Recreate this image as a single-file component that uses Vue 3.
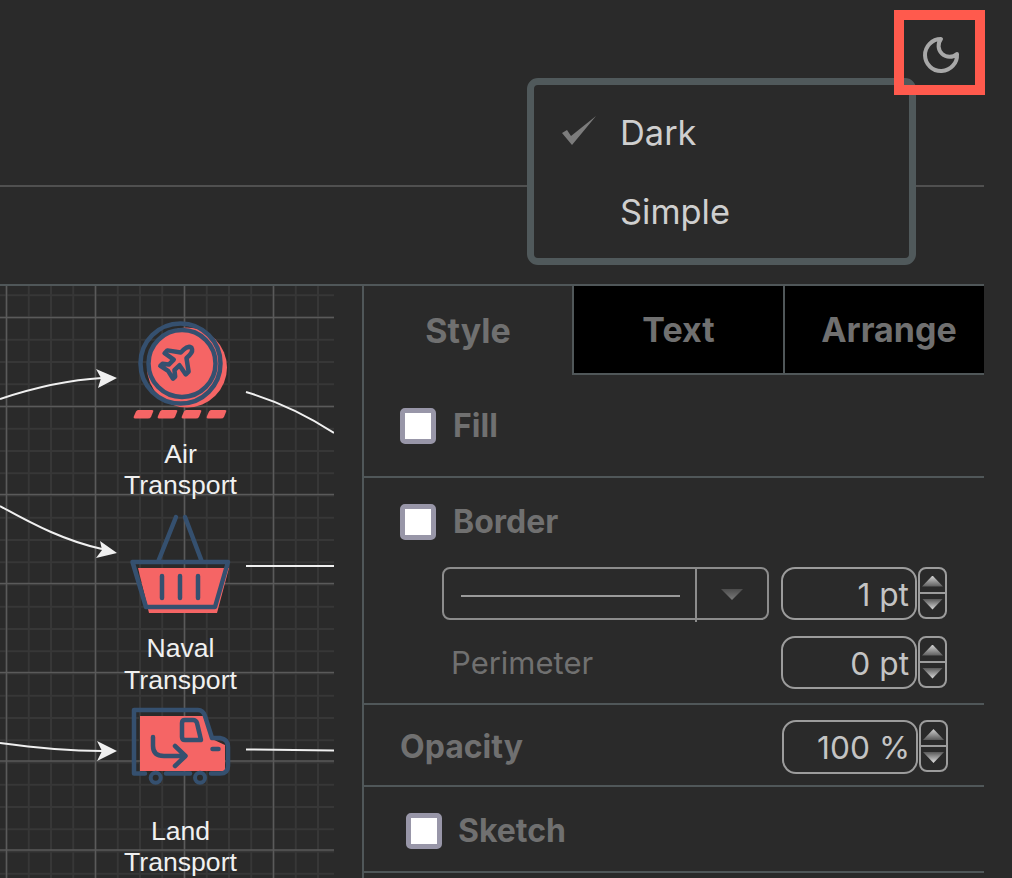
<template>
  <div class="page">
    <div class="frame">
      <div class="menubar"></div>
      <div class="toolbar"></div>
      <div class="main">
        <!-- diagram canvas -->
        <svg class="canvas" width="334" height="592" viewBox="0 286 334 592">
          <line v-for="x in minorX" :key="'mx' + x" :x1="x" :x2="x" y1="286" y2="878" class="minor" />
          <line v-for="y in minorY" :key="'my' + y" :y1="y" :y2="y" x1="0" x2="334" class="minor" />
          <line v-for="x in majorX" :key="'x' + x" :x1="x" :x2="x" y1="286" y2="878" class="major" />
          <line v-for="y in majorY" :key="'y' + y" :y1="y" :y2="y" x1="0" x2="334" class="major" />

          <!-- connectors -->
          <path class="edge" d="M0 399C36 387 66 380 102 378" />
          <path class="edge" d="M0 506C36 526 66 541 102 549" />
          <path class="edge" d="M0 743C36 748 66 751 102 751" />
          <path class="edge" d="M246 392C280 402 308 416 334 433" />
          <path class="edge" d="M246 566H334" />
          <path class="edge" d="M246 749.5L334 750.5" />
          <polygon class="head" points="96,369 117,378 98,388 101,378" />
          <polygon class="head" points="100,541 117,553 96,558 102,550" />
          <polygon class="head" points="97,741 117,751 97,761 102,751" />

          <!-- air transport -->
          <circle class="red" cx="187" cy="367.5" r="40" />
          <circle class="navy" cx="180.5" cy="363.5" r="40" />
          <circle class="navy" cx="182" cy="363.5" r="33.5" />
          <path
            class="navy plane"
            transform="translate(178 361) rotate(45)"
            d="M0 -19Q4 -18 4 -12V-8L15 0V4L4 2V9L9 13V16L0 14L-9 16V13L-4 9V2L-15 4V0L-4 -8V-12Q-4 -18 0 -19Z"
          />
          <path
            v-for="x in dashes"
            :key="x"
            class="red"
            :d="`M${x + 4} 410H${x + 18}Q${x + 20} 410 ${x + 19} 412L${x + 17} 417Q${x + 16} 418.5 ${x + 14} 418.5H${x + 1}Q${x - 1} 418.5 ${x} 416L${x + 2} 411.5Q${x + 3} 410 ${x + 4} 410Z`"
          />

          <!-- naval transport -->
          <polygon class="red" points="138,568 229,568 217,613 149,613" />
          <path class="navy" d="M132.5 562H228L215 607H146ZM158 562L176 517M185 517L202 562" />
          <path class="navy bars" d="M162 576V598M180 576V598M198 576V598" />

          <!-- land transport -->
          <polygon class="red" points="140,716 203,716 212,739 225,745 225,771 140,771" />
          <path class="navy" d="M145 773.5H134V710H198Q203 710 205 716L212 738H220Q228 739 228 747V766Q228 773.5 220 773.5H211" />
          <path class="navy" d="M166 773.5H190" />
          <circle class="wheel" cx="155.7" cy="777.7" r="5" />
          <circle class="wheel" cx="200" cy="777.7" r="5" />
          <path class="navy" d="M185 720H193Q196 720 197 723L201 740H185Q182 740 182 737V723Q182 720 185 720Z" />
          <path class="navy" d="M212.5 749H218.5" />
          <path class="navy" d="M153 737V746Q153 756 164 756H185M175 746L185.5 756L175 766" />

          <text v-for="t in labels" :key="t.text + t.y" class="label" x="180.5" :y="t.y">{{ t.text }}</text>
        </svg>

        <!-- format panel -->
        <div class="panel">
          <div class="tabs">
            <div class="tab active">Style</div>
            <div class="tab text-tab">Text</div>
            <div class="tab arrange-tab">Arrange</div>
          </div>

          <div class="section fill-section">
            <span class="check"></span>
            <span class="strong">Fill</span>
          </div>

          <div class="section border-section">
            <div class="check-row">
              <span class="check"></span>
              <span class="strong">Border</span>
            </div>
            <div class="row line-row">
              <div class="select">
                <span class="select-line"></span>
                <span class="select-btn"><i class="select-arrow"></i></span>
              </div>
              <div class="spin">
                <div class="input">1 pt</div>
                <div class="stepper"><i class="up"></i><i class="down"></i></div>
              </div>
            </div>
            <div class="row perimeter-row">
              <span class="plain">Perimeter</span>
              <div class="spin">
                <div class="input">0 pt</div>
                <div class="stepper"><i class="up"></i><i class="down"></i></div>
              </div>
            </div>
          </div>

          <div class="section opacity-section">
            <span class="strong">Opacity</span>
            <div class="spin">
              <div class="input">100 %</div>
              <div class="stepper"><i class="up"></i><i class="down"></i></div>
            </div>
          </div>

          <div class="section sketch-section">
            <span class="check"></span>
            <span class="strong">Sketch</span>
          </div>
        </div>
      </div>
    </div>

    <!-- theme menu -->
    <div class="menu">
      <div class="menu-item">
        <svg class="tick" width="36" height="32" viewBox="0 0 36 32">
          <polygon points="1,18 6,15 10,21 35,1 11,30" />
        </svg>
        Dark
      </div>
      <div class="menu-item">Simple</div>
    </div>

    <!-- highlighted theme button -->
    <div class="highlight">
      <svg width="40" height="40" viewBox="920 35 40 40">
        <path class="moon" d="M941 39A16 16 0 1 0 957 54A11 11 0 0 1 941 39Z" />
      </svg>
    </div>
  </div>
</template>

<script setup>
const step = 22.25

// minor grid lines every 22.25px, major every fourth one
const majorX = [6.5, 95.5, 184.5, 273.5]
const majorY = [317.5, 406.5, 494.5, 583.5, 672.5, 761, 850]
const minorX = []
const minorY = []
for (let i = 0; i < 16; i++) minorX.push(6.5 + i * step)
for (let i = -1; i < 27; i++) minorY.push(317.5 + i * step)

const dashes = [134, 158, 182, 207]

const labels = [
  { text: 'Air', y: 463 },
  { text: 'Transport', y: 494 },
  { text: 'Naval', y: 657 },
  { text: 'Transport', y: 689 },
  { text: 'Land', y: 840 },
  { text: 'Transport', y: 871 }
]
</script>

<style>
html,
body {
  background: #2a2a2a;
}
</style>

<style scoped>
.page {
  position: relative;
  width: 1012px;
  height: 878px;
  overflow: hidden;
  background: #2a2a2a;
  font-family: Inter, "Liberation Sans", sans-serif;
}

.frame {
  width: 984px;
}

.menubar {
  height: 187px;
  box-sizing: border-box;
  border-bottom: 2px solid #505050;
}

.toolbar {
  height: 99px;
  box-sizing: border-box;
  border-bottom: 2px solid #505759;
}

.main {
  display: flex;
  height: 592px;
}

.canvas {
  display: block;
  flex: none;
}

.minor {
  stroke: #373737;
  stroke-width: 2;
}

.major {
  stroke: #5a5a5a;
  stroke-width: 1.5;
}

.edge {
  fill: none;
  stroke: #f0f0f0;
  stroke-width: 2;
}

.head {
  fill: #f0f0f0;
}

.red {
  fill: #f56565;
}

.navy {
  fill: none;
  stroke: #35506f;
  stroke-width: 4.5;
  stroke-linecap: round;
  stroke-linejoin: round;
}

.plane {
  fill: #f56565;
}

.bars {
  stroke-width: 4.5;
}

.wheel {
  fill: #2a2a2a;
  stroke: #35506f;
  stroke-width: 4;
}

.label {
  fill: #f0f0f0;
  font-family: "Liberation Sans", Arial, sans-serif;
  font-size: 26.6px;
  text-anchor: middle;
}

.panel {
  flex: none;
  width: 622px;
  margin-left: 28px;
  box-sizing: border-box;
  border-left: 2px solid #505759;
  color: #707070;
}

.tabs {
  display: flex;
  height: 89px;
  font-size: 34px;
  font-weight: 700;
}

.tab {
  display: flex;
  align-items: center;
  justify-content: center;
  box-sizing: border-box;
  background: #000;
  border-left: 2px solid #505759;
  border-bottom: 2px solid #505759;
}

.tab.active {
  width: 208px;
  background: transparent;
  border: 0;
}

.text-tab {
  width: 211px;
}

.arrange-tab {
  width: 201px;
  padding-left: 9px;
}

.section {
  box-sizing: border-box;
  border-bottom: 2px solid #505759;
}

.strong {
  font-size: 32px;
  font-weight: 700;
  line-height: 36px;
}

.plain {
  font-size: 31px;
}

.check {
  flex: none;
  width: 36px;
  height: 36px;
  box-sizing: border-box;
  background: #fff;
  border: 5px solid #9896a8;
  border-radius: 5px;
}

.check-row,
.fill-section,
.sketch-section {
  display: flex;
  align-items: center;
  gap: 17px;
}

.fill-section {
  height: 103px;
  padding-left: 36px;
}

.border-section {
  height: 227px;
  padding: 26px 36px 0;
}

.row {
  display: flex;
  align-items: center;
}

.line-row {
  margin: 27px 0 0 42px;
}

.perimeter-row {
  width: 496px;
  margin: 16px 0 0 51px;
}

.select {
  display: flex;
  width: 327px;
  height: 53px;
  box-sizing: border-box;
  border: 2px solid #8c8c8c;
  border-radius: 8px;
}

.select-line {
  width: 219px;
  height: 2px;
  margin: 26px 0 0 17px;
  background: #9a9a9a;
}

.select-btn {
  display: flex;
  flex: 1;
  align-items: center;
  justify-content: center;
  height: 53px;
  margin-left: 15px;
  border-left: 2px solid #8c8c8c;
}

.select-arrow {
  width: 22px;
  height: 11px;
  margin-top: -2px;
  background: linear-gradient(#4c4c4c, #7a7a7a);
  clip-path: polygon(0 0, 100% 0, 50% 100%);
}

.spin {
  display: flex;
  align-items: center;
  margin-left: auto;
  gap: 1px;
}

.line-row .spin {
  margin-left: 12px;
}

.input {
  width: 136px;
  height: 53px;
  box-sizing: border-box;
  padding-right: 6px;
  border: 2px solid #9c9c9c;
  border-radius: 14px;
  color: #c4c4c4;
  font-size: 31.7px;
  line-height: 52px;
  text-align: right;
}

.stepper {
  display: flex;
  flex-direction: column;
  width: 29px;
  height: 52px;
  margin-top: -2px;
  box-sizing: border-box;
  border: 2px solid #9c9c9c;
  border-radius: 8px;
}

.stepper i {
  flex: 1;
  display: block;
  position: relative;
}

.stepper i::after {
  content: "";
  position: absolute;
  left: 2px;
  width: 21px;
  height: 11px;
}

.up {
  border-bottom: 2px solid #9c9c9c;
}

.up::after {
  top: 7px;
  background: linear-gradient(#d0d0d0, #595959);
  clip-path: polygon(50% 0, 100% 100%, 0 100%);
}

.down::after {
  top: 5px;
  background: linear-gradient(#595959, #e0e0e0);
  clip-path: polygon(0 0, 100% 0, 50% 100%);
}

.opacity-section {
  display: flex;
  align-items: center;
  height: 82px;
  padding: 4px 36px 0;
}

.opacity-section .input {
  height: 54px;
}

.sketch-section {
  gap: 16px;
  height: 86px;
  padding: 4px 0 0 42px;
}

.menu {
  position: absolute;
  left: 527px;
  top: 78px;
  display: flex;
  flex-direction: column;
  width: 389px;
  height: 187px;
  box-sizing: border-box;
  padding-top: 15px;
  background: #2a2a2a;
  border: 7px solid #50595b;
  border-radius: 11px;
  color: #cfcfcf;
  font-size: 34.4px;
}

.menu-item {
  position: relative;
  height: 79px;
  padding-left: 86px;
  line-height: 66px;
}

.tick {
  position: absolute;
  left: 27px;
  top: 15px;
}

.tick polygon {
  fill: #7c7c7c;
}

.highlight {
  position: absolute;
  left: 894px;
  top: 10px;
  display: flex;
  align-items: center;
  justify-content: center;
  width: 91px;
  height: 85px;
  box-sizing: border-box;
  padding-top: 5px;
  border: 10px solid #ff5a4d;
}

.moon {
  fill: none;
  stroke: #a8a8a8;
  stroke-width: 4;
  stroke-linejoin: round;
}
</style>
